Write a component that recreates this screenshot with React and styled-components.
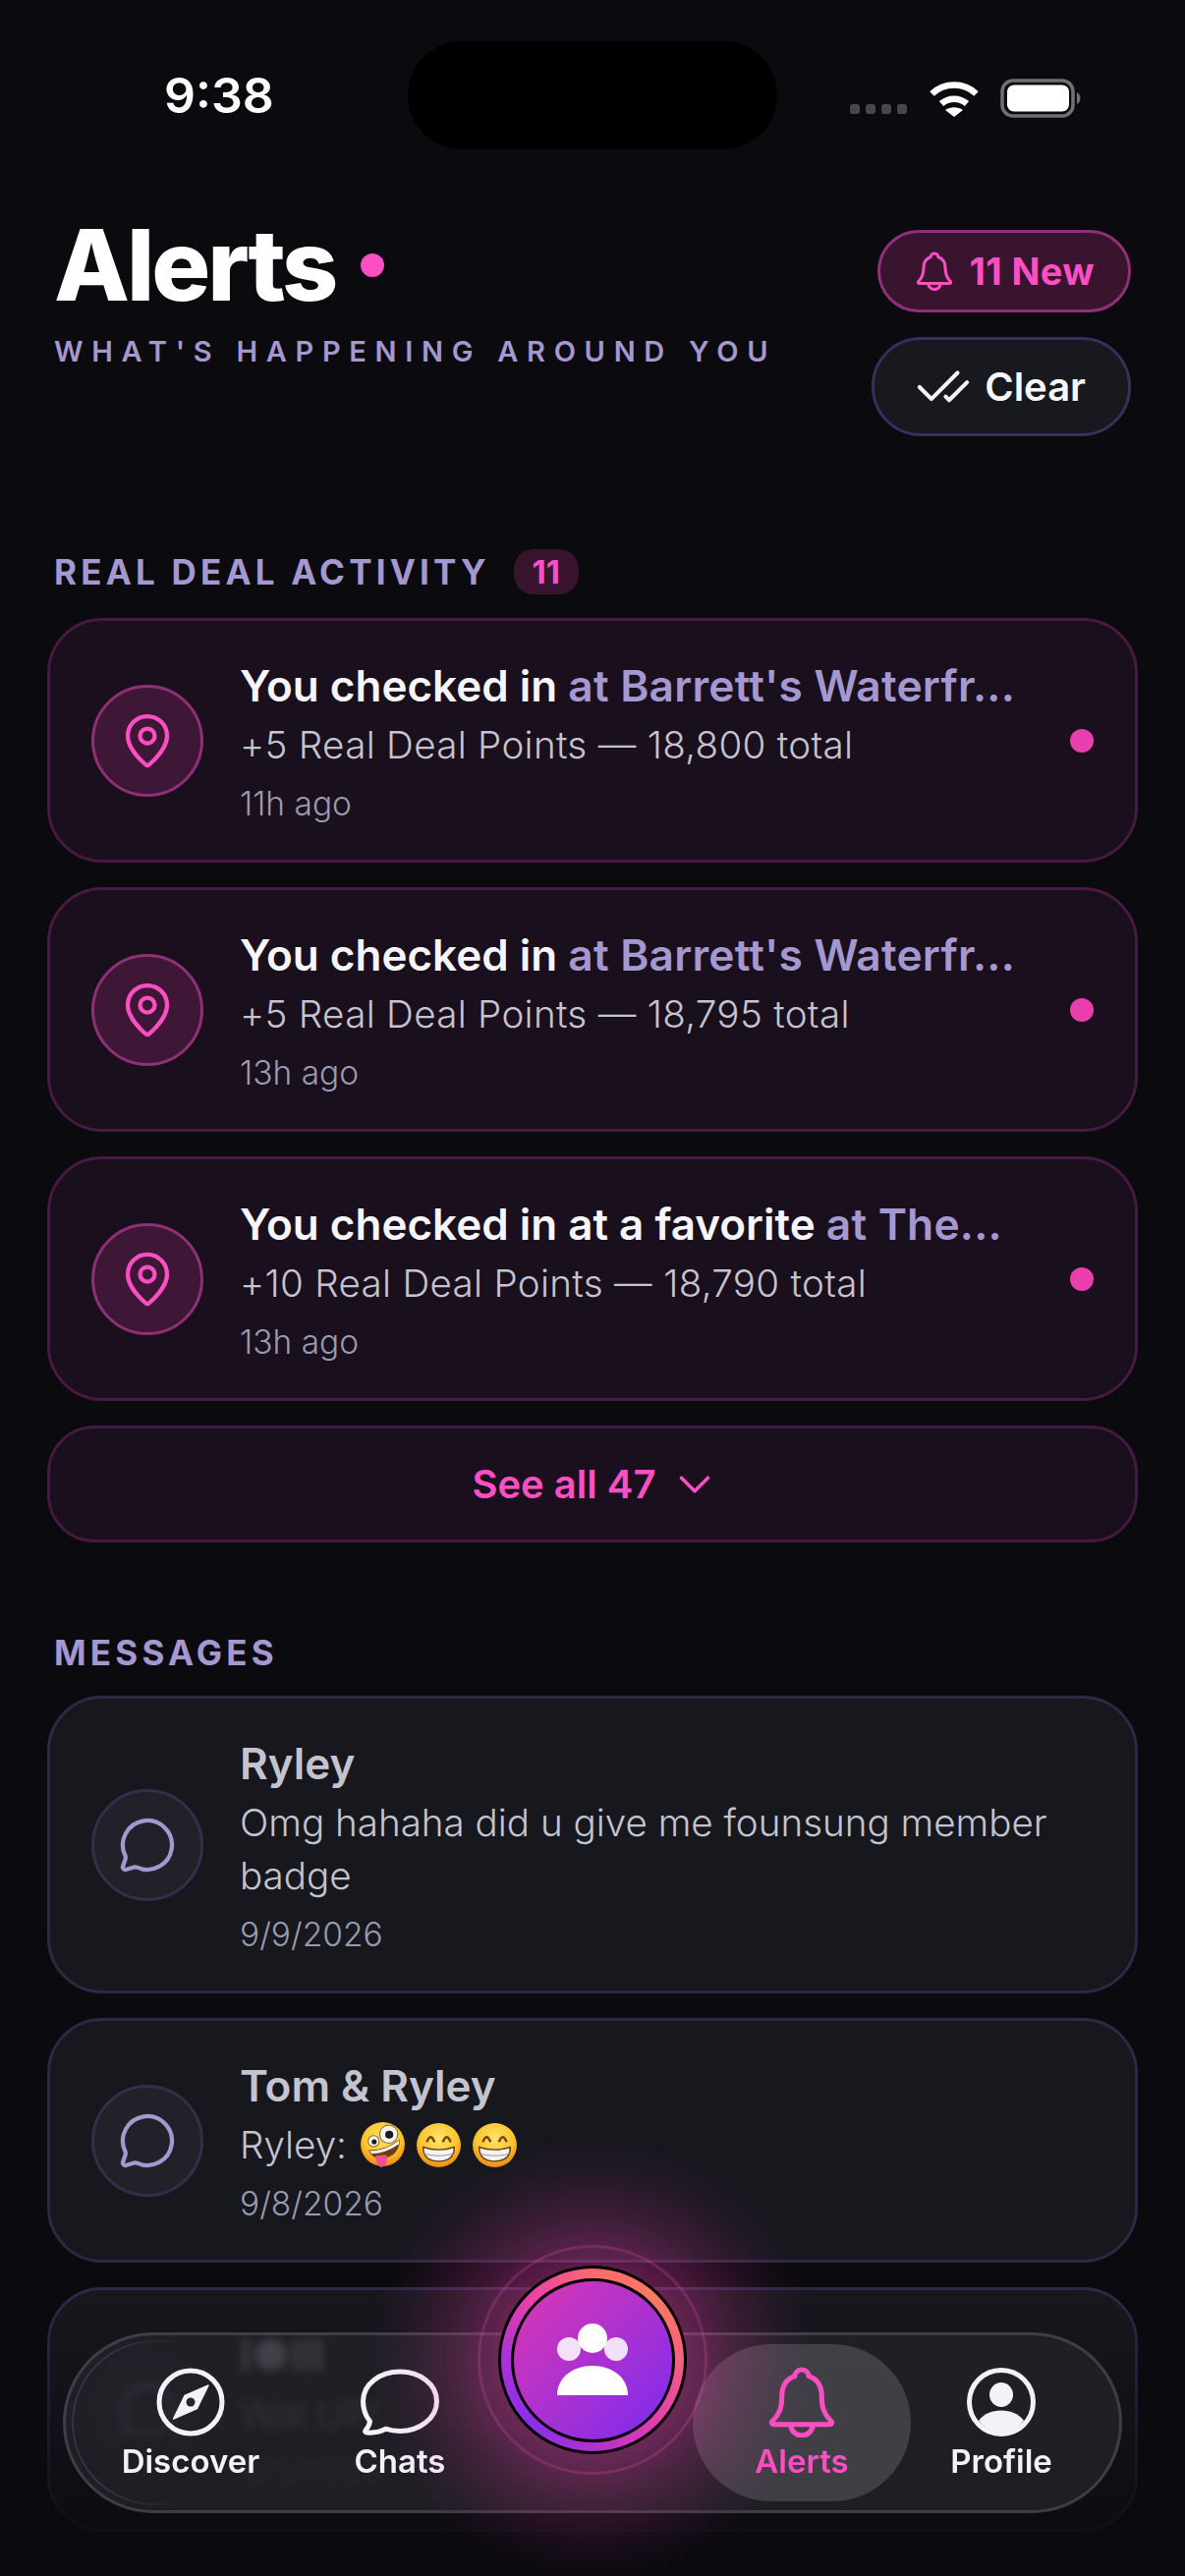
import styled, { createGlobalStyle } from 'styled-components';
import { MapPin, MessageCircle, CheckCheck, ChevronDown } from 'lucide-react';

const PINK = '#ff4fc3';
const LAVENDER = '#a598d0';

const GlobalStyle = createGlobalStyle`
  html, body {
    margin: 0;
    background: #0a0a0f;
  }
  * {
    box-sizing: border-box;
  }
`;

// 알림 데이터
const alerts = [
  { id: 1, lead: 'You checked in', place: "at Barrett's Waterfr...", points: '+5 Real Deal Points — 18,800 total', time: '11h ago' },
  { id: 2, lead: 'You checked in', place: "at Barrett's Waterfr...", points: '+5 Real Deal Points — 18,795 total', time: '13h ago' },
  { id: 3, lead: 'You checked in at a favorite', place: 'at The...', points: '+10 Real Deal Points — 18,790 total', time: '13h ago' },
];

function BellGlyph({ width, height, color, strokeWidth = 5 }) {
  return (
    <svg width={width} height={height} viewBox="0 0 65 71" fill="none" stroke={color} strokeWidth={strokeWidth} strokeLinejoin="round" strokeLinecap="round">
      <path d="M32.5 3c4 0 7 3 7 6.5 9 3 13 11 13 20.5 0 12 3 18 9 24 2 2 1 4-2 4H5.500c-3 0-4-2-2-4 6-6 9-12 9-24 0-9.500 4-17.500 13-20.500C25.500 6 28.500 3 32.500 3Z" />
      <path d="M21.500 58.500a11 10.500 0 0 0 22 0" />
    </svg>
  );
}

function CompassGlyph() {
  return (
    <svg width="70" height="70" viewBox="0 0 70 70">
      <circle cx="35" cy="35" r="32" fill="none" stroke="#f2f2f7" strokeWidth="5" />
      <path d="M53 18 41.500 41.500 17.500 52 29 28.500Z" fill="#f2f2f7" stroke="#f2f2f7" strokeWidth="1.500" strokeLinejoin="round" />
      <circle cx="35" cy="35" r="4.500" fill="#26262c" />
    </svg>
  );
}

function ChatGlyph() {
  return (
    <svg width="80" height="68" viewBox="0 0 80 68" fill="none" stroke="#f2f2f7" strokeWidth="5" strokeLinejoin="round">
      <path d="M40 3c20 0 37.500 12.500 37.500 30S60 63.500 40 63.500c-5 0-10-.8-14.500-2.300C20 64.500 13 65.500 6 65c-1.500-.2-1.800-1.500-.8-2.500 2.300-2.500 3.800-5.500 4.300-9C5 48 2.500 41 2.500 33 2.500 15.500 20 3 40 3Z" />
    </svg>
  );
}

function ProfileGlyph() {
  return (
    <svg width="70" height="70" viewBox="0 0 70 70">
      <circle cx="35" cy="35" r="32.500" fill="none" stroke="#f2f2f7" strokeWidth="5" />
      <ellipse cx="35" cy="27.500" rx="12" ry="12.500" fill="#f2f2f7" />
      <path d="M12 54c5-7 13-10.500 23-10.500S53 47 58 54c-6 8-14 12-23 12s-17-4-23-12Z" fill="#f2f2f7" />
    </svg>
  );
}

function WifiGlyph() {
  return (
    <svg width="52" height="38" viewBox="0 0 52 38" fill="none" stroke="#fff" strokeWidth="6.500">
      <path d="M3.500 14.500C16 2.500 36 2.500 48.500 14.500" />
      <path d="M13 24.500c7.500-6.500 18.500-6.500 26 0" />
      <path d="M17 31c5-3.800 13-3.800 18 0l-9 7Z" fill="#fff" stroke="none" />
    </svg>
  );
}

function BatteryGlyph() {
  return (
    <svg width="82" height="40" viewBox="0 0 82 40">
      <rect x="2" y="2" width="72" height="36" rx="11" fill="none" stroke="#6f6f74" strokeWidth="3.500" />
      <rect x="7" y="6.500" width="63" height="27" rx="7" fill="#fff" />
      <path d="M78 14c2 1 3.500 3 3.500 6s-1.500 5-3.500 6Z" fill="#6f6f74" />
    </svg>
  );
}

function GroupGlyph() {
  return (
    <svg width="76" height="74" viewBox="0 0 76 74" fill="#fff">
      <circle cx="14" cy="26" r="12" opacity="0.85" />
      <circle cx="62" cy="26" r="12" opacity="0.85" />
      <circle cx="38" cy="15" r="15" />
      <path d="M2 73C2 55 18 43 38 43s36 12 36 30Z" />
    </svg>
  );
}

function GrinEmoji({ id }) {
  return (
    <svg width="45" height="45" viewBox="0 0 44 44" role="img" aria-label="😁">
      <defs>
        <radialGradient id={id} cx="50%" cy="35%" r="65%">
          <stop offset="0%" stopColor="#ffe46a" />
          <stop offset="65%" stopColor="#fcc430" />
          <stop offset="100%" stopColor="#e98a12" />
        </radialGradient>
      </defs>
      <circle cx="22" cy="22" r="22" fill={`url(#${id})`} />
      <path d="M10.500 18q3.500-8 7 0M26.500 18q3.500-8 7 0" fill="none" stroke="#7a4610" strokeWidth="2.400" strokeLinecap="round" />
      <path d="M6.500 24q15.500 5 31 0 0 14-15.500 14T6.500 24Z" fill="#f4f4f4" stroke="#6d3e10" strokeWidth="1.400" />
      <path d="M7.500 30.500q14.500 4 29 0" fill="none" stroke="#9a9a9a" strokeWidth="1" />
    </svg>
  );
}

function ZanyEmoji() {
  return (
    <svg width="45" height="46" viewBox="0 0 44 45" role="img" aria-label="🤪">
      <defs>
        <radialGradient id="zanyFace" cx="50%" cy="35%" r="65%">
          <stop offset="0%" stopColor="#ffe46a" />
          <stop offset="65%" stopColor="#fcc430" />
          <stop offset="100%" stopColor="#e98a12" />
        </radialGradient>
      </defs>
      <circle cx="22" cy="22" r="22" fill="url(#zanyFace)" />
      <path d="M8 28Q25 28 39 17 39 31 26 35.500 12 39 8 28Z" fill="#6d3e10" />
      <path d="M9 28.500Q25 28.500 38.500 18l-.5 4Q25 31 11 31.500Z" fill="#f4f4f4" />
      <path d="M15 33.500 26 32.500Q28 43 21 45 15 44 15 33.500Z" fill="#f0508f" />
      <circle cx="28" cy="12" r="9" fill="#f4f4f4" stroke="#8a6a20" strokeWidth="1" />
      <circle cx="28.500" cy="12.500" r="4" fill="#1a1a1a" />
      <circle cx="13" cy="19" r="5.500" fill="#f4f4f4" stroke="#8a6a20" strokeWidth="1" />
      <circle cx="13.500" cy="19.500" r="2.500" fill="#1a1a1a" />
    </svg>
  );
}

export default function App() {
  return (
    <Page>
      <GlobalStyle />
      <StatusBar>
        <Clock>9:38</Clock>
        <Island />
        <StatusIcons>
          <SignalDots>
            <SignalDot />
            <SignalDot />
            <SignalDot />
            <SignalDot />
          </SignalDots>
          <WifiGlyph />
          <BatteryGlyph />
        </StatusIcons>
      </StatusBar>

      <Content>
        <Header>
          <div>
            <TitleRow>
              <Title>Alerts</Title>
              <TitleDot />
            </TitleRow>
            <Subtitle>WHAT'S HAPPENING AROUND YOU</Subtitle>
          </div>
          <HeaderActions>
            <NewPill>
              <BellGlyph width={36} height={40} color={PINK} strokeWidth={5.500} />
              11 New
            </NewPill>
            <ClearPill>
              <CheckCheck size={58} strokeWidth={1.700} color="#f4f4f8" />
              Clear
            </ClearPill>
          </HeaderActions>
        </Header>

        <SectionHead>
          <SectionTitle>REAL DEAL ACTIVITY</SectionTitle>
          <CountBadge>11</CountBadge>
        </SectionHead>
        <CardList>
          {alerts.map((item) => (
            <AlertCard key={item.id}>
              <IconCircle $pink>
                <MapPin size={60} strokeWidth={1.700} color={PINK} />
              </IconCircle>
              <CardText>
                <CardTitle>
                  {item.lead} <Place>{item.place}</Place>
                </CardTitle>
                <PointsLine>{item.points}</PointsLine>
                <CardTime>{item.time}</CardTime>
              </CardText>
              <UnreadDot />
            </AlertCard>
          ))}
          <SeeAll>
            See all 47
            <SeeAllChevron>
              <ChevronDown size={54} strokeWidth={1.600} color={PINK} />
            </SeeAllChevron>
          </SeeAll>
        </CardList>

        <SectionHead $messages>
          <SectionTitle>MESSAGES</SectionTitle>
        </SectionHead>
        <CardList>
          <MessageCard>
            <IconCircle>
              <MessageCircle size={60} strokeWidth={1.700} color={LAVENDER} />
            </IconCircle>
            <CardText>
              <CardTitle $muted>Ryley</CardTitle>
              <CardBody>Omg hahaha did u give me founsung member badge</CardBody>
              <CardTime>9/9/2026</CardTime>
            </CardText>
          </MessageCard>
          <MessageCard>
            <IconCircle>
              <MessageCircle size={60} strokeWidth={1.700} color={LAVENDER} />
            </IconCircle>
            <CardText>
              <CardTitle $muted>Tom &amp; Ryley</CardTitle>
              <CardBody>
                Ryley:
                <EmojiRow>
                  <ZanyEmoji />
                  <GrinEmoji id="grinA" />
                  <GrinEmoji id="grinB" />
                </EmojiRow>
              </CardBody>
              <CardTime>9/8/2026</CardTime>
            </CardText>
          </MessageCard>
          <MessageCard>
            <IconCircle>
              <MessageCircle size={60} strokeWidth={1.700} color={LAVENDER} />
            </IconCircle>
            <CardText>
              <CardTitle $muted>l●lll</CardTitle>
              <CardBody>Wat UP!</CardBody>
              <CardTime>8/3/2026</CardTime>
            </CardText>
          </MessageCard>
        </CardList>
      </Content>

      <BottomFade />

      <TabBar>
        <TabItem>
          <TabIcon><CompassGlyph /></TabIcon>
          <TabLabel>Discover</TabLabel>
        </TabItem>
        <TabItem>
          <TabIcon><ChatGlyph /></TabIcon>
          <TabLabel>Chats</TabLabel>
        </TabItem>
        <span />
        <TabItem $active>
          <TabIcon><BellGlyph width={66} height={72} color={PINK} /></TabIcon>
          <TabLabel $active>Alerts</TabLabel>
        </TabItem>
        <TabItem>
          <TabIcon><ProfileGlyph /></TabIcon>
          <TabLabel>Profile</TabLabel>
        </TabItem>
      </TabBar>

      <FabGlow>
        <FabHalo />
        <FabRing>
          <FabCore>
            <GroupGlyph />
          </FabCore>
        </FabRing>
      </FabGlow>
    </Page>
  );
}

const Page = styled.div`
  position: relative;
  width: 1206px;
  height: 2622px;
  overflow: hidden;
  background: #0a0a0f;
  color: #fff;
  font-family: Inter, 'Liberation Sans', sans-serif;
`;

const StatusBar = styled.div`
  display: grid;
  grid-template-columns: 415px 376px 1fr;
  align-items: center;
  padding-top: 42px;
`;

const Clock = styled.div`
  padding-left: 167px;
  font-size: 50px;
  font-weight: 600;
  line-height: 110px;
`;

const Island = styled.div`
  height: 110px;
  border-radius: 55px;
  background: #000;
`;

const StatusIcons = styled.div`
  display: flex;
  align-items: center;
  padding-left: 74px;
  padding-top: 6px;
  svg:nth-child(2) {
    margin-left: 22px;
  }
  svg:nth-child(3) {
    margin-left: 21px;
  }
`;

const SignalDots = styled.div`
  display: flex;
  gap: 6px;
  padding-top: 22px;
`;

const SignalDot = styled.span`
  width: 10px;
  height: 10px;
  border-radius: 3px;
  background: #48484c;
`;

const Content = styled.div`
  padding: 82px 48px 0;
`;

const Header = styled.header`
  display: flex;
  justify-content: space-between;
  align-items: flex-start;
  padding: 0 7px;
`;

const TitleRow = styled.div`
  display: flex;
  align-items: center;
  gap: 26px;
  margin-top: -20px;
`;

const Title = styled.h1`
  margin: 0;
  font-size: 100px;
  font-weight: 800;
  line-height: 112px;
  letter-spacing: -0.03em;
`;

const TitleDot = styled.span`
  width: 24px;
  height: 24px;
  border-radius: 50%;
  background: ${PINK};
`;

const Subtitle = styled.div`
  margin-top: 14px;
  font-size: 29px;
  font-weight: 600;
  line-height: 36px;
  letter-spacing: 0.3em;
  color: ${LAVENDER};
`;

const HeaderActions = styled.div`
  display: flex;
  flex-direction: column;
  align-items: flex-end;
  gap: 25px;
`;

const NewPill = styled.div`
  display: flex;
  align-items: center;
  gap: 18px;
  height: 84px;
  padding: 0 34px 0 37px;
  border: 3px solid #90307a;
  border-radius: 42px;
  background: #38142f;
  color: ${PINK};
  font-size: 38px;
  font-weight: 700;
  letter-spacing: 0.01em;
`;

const ClearPill = styled.div`
  display: flex;
  align-items: center;
  gap: 13px;
  height: 101px;
  padding: 0 43px 0 41px;
  border: 3px solid #37305a;
  border-radius: 50px;
  background: #18181f;
  color: #f8f8fb;
  font-size: 40px;
  font-weight: 600;
`;

const SectionHead = styled.div`
  display: flex;
  align-items: center;
  gap: 24px;
  height: 46px;
  margin-top: ${(props) => (props.$messages ? '89px' : '115px')};
  margin-bottom: ${(props) => (props.$messages ? '21px' : '24px')};
  padding-left: 7px;
`;

const SectionTitle = styled.h2`
  margin: 0;
  font-size: 35px;
  font-weight: 700;
  letter-spacing: 0.12em;
  color: ${LAVENDER};
`;

const CountBadge = styled.span`
  display: flex;
  align-items: center;
  justify-content: center;
  width: 66px;
  height: 46px;
  border-radius: 20px;
  background: #38142f;
  color: ${PINK};
  font-size: 33px;
  font-weight: 700;
`;

const CardList = styled.div`
  display: flex;
  flex-direction: column;
  gap: 25px;
`;

const AlertCard = styled.div`
  display: flex;
  align-items: center;
  gap: 37px;
  min-height: 249px;
  padding: 38px 42px 35px;
  border: 3px solid #481a41;
  border-radius: 56px;
  background: #1a0f1c;
`;

const MessageCard = styled(AlertCard)`
  border-color: #2c2945;
  background: #17171e;
`;

const IconCircle = styled.div`
  display: flex;
  flex: none;
  align-items: center;
  justify-content: center;
  width: 114px;
  height: 114px;
  margin-top: -3px;
  border: 3px solid ${(props) => (props.$pink ? '#8f2f78' : '#322e4c')};
  border-radius: 50%;
  background: ${(props) => (props.$pink ? '#3e1736' : '#212129')};
`;

const CardText = styled.div`
  flex: 1;
  min-width: 0;
`;

const CardTitle = styled.div`
  font-size: 44px;
  font-weight: 580;
  line-height: 56px;
  white-space: nowrap;
  color: ${(props) => (props.$muted ? '#c4c4d0' : '#f6f6fa')};
`;

const Place = styled.span`
  font-size: 44.3px;
  font-weight: 600;
  letter-spacing: 0.005em;
  color: ${LAVENDER};
`;

const CardBody = styled.div`
  display: flex;
  flex-wrap: wrap;
  align-items: center;
  margin-top: 5px;
  font-size: 38.6px;
  font-weight: 300;
  line-height: 54px;
  color: #c4c4d0;
`;

const PointsLine = styled(CardBody)`
  letter-spacing: 0.3px;
`;

const EmojiRow = styled.span`
  display: inline-flex;
  align-items: center;
  gap: 12px;
  margin-left: 14px;
`;

const CardTime = styled.div`
  margin-top: 11px;
  font-size: 33.5px;
  font-weight: 300;
  line-height: 44px;
  color: #9a9ab0;
`;

const UnreadDot = styled.span`
  flex: none;
  width: 24px;
  height: 24px;
  margin-top: -3px;
  border-radius: 50%;
  background: #e93fae;
`;

const SeeAll = styled.div`
  display: flex;
  align-items: center;
  justify-content: center;
  gap: 12px;
  height: 119px;
  border: 3px solid #451a40;
  border-radius: 48px;
  background: #1a0f1c;
  color: ${PINK};
  font-size: 40px;
  font-weight: 600;
`;

const SeeAllChevron = styled.span`
  display: flex;
  margin-right: -8px;
`;

const BottomFade = styled.div`
  position: absolute;
  left: 0;
  right: 0;
  bottom: 0;
  height: 290px;
  background: linear-gradient(to bottom, rgba(10, 10, 15, 0), rgba(10, 10, 15, 0.85) 85%);
`;

const TabBar = styled.nav`
  position: absolute;
  left: 64px;
  bottom: 64px;
  display: grid;
  grid-template-columns: 200px 226px 185px 222px 184px;
  align-items: center;
  width: 1078px;
  height: 184px;
  padding-left: 27px;
  border: 3px solid rgba(255, 255, 255, 0.14);
  border-radius: 92px;
  background: rgba(36, 36, 42, 0.76);
  backdrop-filter: blur(4px);

  &::before {
    content: '';
    position: absolute;
    top: 5px;
    bottom: 5px;
    left: 6px;
    width: 110px;
    border: 2px solid rgba(90, 80, 140, 0.4);
    border-right: 0;
    border-radius: 88px 0 0 88px;
    mask-image: linear-gradient(to right, #000 40%, transparent);
  }
`;

const TabItem = styled.div`
  display: flex;
  flex-direction: column;
  align-items: center;
  height: 160px;
  padding-top: 23px;
  border-radius: 80px;
  background: ${(props) => (props.$active ? 'rgba(255, 255, 255, 0.15)' : 'transparent')};
`;

const TabIcon = styled.div`
  display: flex;
  align-items: center;
  justify-content: center;
  height: 72px;
`;

const TabLabel = styled.span`
  margin-top: 4px;
  font-size: 33px;
  font-weight: 600;
  line-height: 40px;
  color: ${(props) => (props.$active ? PINK : '#f2f2f7')};
`;

const FabGlow = styled.div`
  position: absolute;
  left: 373px;
  top: 2172px;
  display: flex;
  align-items: center;
  justify-content: center;
  width: 460px;
  height: 460px;
  border-radius: 50%;
  background: radial-gradient(closest-side, rgba(236, 60, 170, 0.38) 40%, rgba(236, 60, 170, 0.17) 65%, rgba(236, 60, 170, 0.05) 85%, rgba(236, 60, 170, 0) 100%);
  pointer-events: none;
`;

const FabHalo = styled.div`
  position: absolute;
  left: 113px;
  top: 113px;
  width: 234px;
  height: 234px;
  border: 3px solid rgba(240, 80, 180, 0.22);
  border-radius: 50%;
`;

const FabRing = styled.div`
  position: relative;
  display: flex;
  align-items: center;
  justify-content: center;
  width: 192px;
  height: 192px;
  border: 3px solid #000;
  border-radius: 50%;
  background: conic-gradient(#f86a70, #ff7a60 45deg, #f56080 90deg, #e23cb0 135deg, #b030d0 180deg, #8a30e8 225deg, #a832d8 270deg, #ec40a8 315deg, #f86a70);
`;

const FabCore = styled.div`
  display: flex;
  align-items: center;
  justify-content: center;
  width: 167px;
  height: 167px;
  border: 3px solid #000;
  border-radius: 50%;
  background: linear-gradient(135deg, #dc38b0, #7a2bf0);
`;
